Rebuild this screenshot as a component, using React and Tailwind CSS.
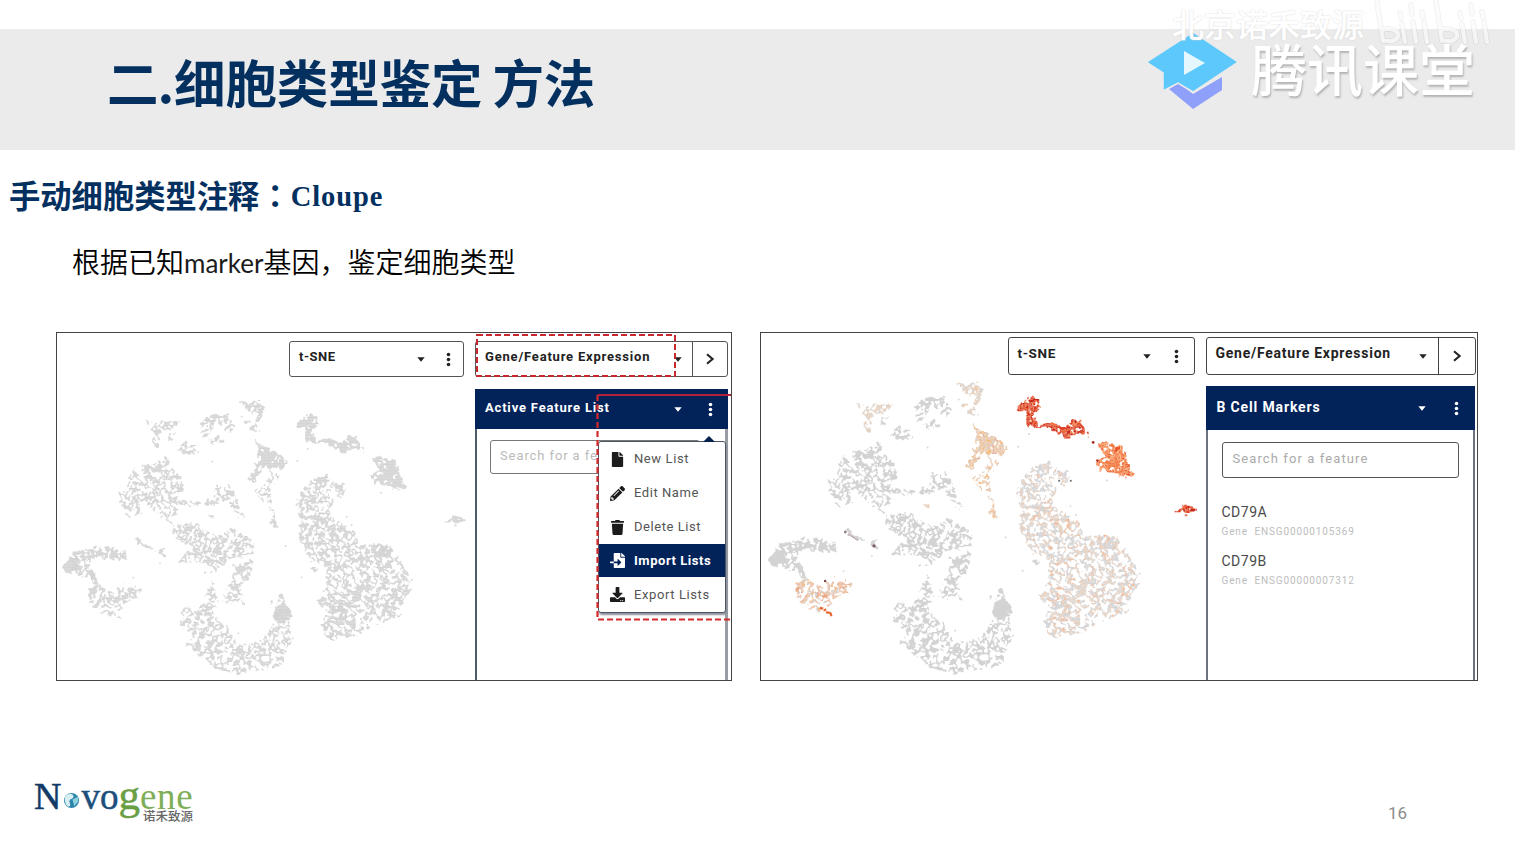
import React from "react";
import { FaFile, FaPencilAlt, FaTrash, FaFileImport, FaDownload } from "react-icons/fa";

const CLUSTERS = [
  { k: "beige", d: 0.4, p: [565,230,600,236,612,220,645,245,632,292,600,268] },
  { k: "beige", d: 0.4, p: [578,290,610,292,628,318,612,326,600,308] },
  { k: "beige", d: 0.36, p: [280,290,330,298,345,285,382,290,385,305,350,320,330,325,325,370,310,362,312,325] },
  { k: "gray", d: 0.3, p: [355,325,375,322,375,345,355,345] },
  { k: "gray", d: 0.34, p: [450,340,445,300,480,270,530,270,555,300,540,328,525,322,520,300,490,300,468,340] },
  { k: "gray", d: 0.4, p: [470,350,500,335,520,342,482,362] },
  { k: "gray", d: 0.42, p: [370,402,400,345,415,365,440,368,442,388,400,388] },
  { k: "orange", d: 0.62, p: [608,345,640,366,668,375,706,412,698,432,665,430,640,425,612,475,595,468,615,425,628,400] },
  { k: "orange", d: 0.28, p: [650,430,690,455,665,482,664,530,628,530,615,500,650,470] },
  { k: "orange", d: 0.3, p: [655,540,668,550,680,615,672,612,660,590] },
  { k: "gray", d: 0.29, p: [205,510,235,490,235,445,285,420,350,393,365,430,395,455,398,500,370,520,420,530,490,520,500,485,540,480,560,530,580,582,562,578,530,525,480,540,400,545,360,580,320,570,290,530,262,530,275,565,235,580,215,545] },
  { k: "gray", d: 0.3, p: [315,565,380,600,440,596,500,635,550,612,600,635,612,670,600,692,540,700,480,748,450,740,470,715,380,710,400,690,430,665,378,640,365,605] },
  { k: "gray", d: 0.34, p: [545,730,605,700,595,765,570,780,578,838,520,830,530,790,550,765] },
  { k: "gray", d: 0.3, p: [460,820,485,770,500,820,485,870,520,900,550,940,590,955,635,945,655,920,678,860,720,850,718,960,690,1025,600,1045,560,1045,490,1030,440,990,410,960,430,930,385,890,400,850,450,850] },
  { k: "gray", d: 1.2, p: [678,845,700,830,720,860,712,885,690,898,672,880] },
  { k: "gray", d: 0.45, p: [660,835,698,805,708,825,690,832] },
  { k: "gray", d: 0.4, p: [55,685,130,662,230,680,236,697,200,705,130,695,110,715,130,740,135,765,90,752,65,740] },
  { k: "gray", d: 1, p: [40,725,55,702,80,705,82,735,50,745] },
  { k: "warm", d: 0.34, p: [120,790,150,785,180,800,220,778,222,795,245,785,275,795,260,812,225,830,220,852,190,855,212,885,160,862,115,835] },
  { k: "gray", d: 0.35, p: [115,740,135,750,150,785,130,780] },
  { k: "red", d: 0.62, p: [730,305,770,262,800,275,800,300,782,315,795,345,840,345,880,350,895,333,915,335,945,385,930,378,905,368,888,388,830,358,765,350,765,312] },
  { k: "fire", d: 0.62, p: [965,395,1035,410,1050,450,1070,490,1050,498,1025,485,975,472,960,450,985,435] },
  { k: "speckle", d: 0.32, p: [742,540,745,505,770,475,830,450,850,465,845,490,870,465,892,500,870,515,838,510,850,545,835,570,870,595,915,625,920,660,980,655,1020,660,1030,690,1060,720,1085,790,1050,850,1055,875,960,905,920,935,840,945,815,905,830,860,800,830,830,790,830,730,780,700,745,650,750,590] },
  { k: "speckle", d: 0.6, p: [845,850,880,850,885,885,850,885] },
  { k: "speckle", d: 0.6, p: [985,660,1020,662,1022,690,985,692] },
  { k: "speckle", d: 0.6, p: [818,900,848,905,850,945,828,940] },
  { k: "gray", d: 0.4, p: [788,720,802,728,795,752,785,735] },
  { k: "red", d: 3, p: [1178,592,1200,584,1205,571,1222,578,1247,588,1212,599,1200,590] },
  { k: "gray", d: 1, p: [250,642,266,640,268,652,285,662,312,672,300,676,270,662] },
  { k: "gray", d: 1, p: [328,678,342,674,341,692,330,692] },
  { k: "warm", d: 1, p: [476,568,494,576,478,580] },
];

const PALETTES = {
  gray: ["#d3d3d3"],
  beige: ["#d6d3d1", "#e9d2bd", "#d3d3d3", "#efc9a6", "#e2cfc4"],
  orange: ["#e9d3bf", "#f5bd86", "#dccfc5", "#f2c9a2", "#e3b9a4"],
  warm: ["#d9cdc8", "#efc3a8", "#e9a987", "#d3d3d3", "#f3ba84"],
  speckle: ["#d3d5d8", "#d3d3d3", "#e8d3c3", "#d8d4d2", "#f0c0a2", "#d5d7dc"],
  red: ["#d8321c", "#ee6a3c", "#c9281a", "#f4905c", "#dc4426"],
  fire: ["#f5814c", "#f79a5e", "#e9582f", "#fbb27c", "#f07a45"],
};

function hash(x, y, s) {
  let h = (x * 374761393 + y * 668265263 + s * 1442695041) | 0;
  h = Math.imul(h ^ (h >>> 13), 1274126177);
  return ((h ^ (h >>> 16)) >>> 0) / 4294967295;
}

function noise(x, y, s) {
  const xi = Math.floor(x);
  const yi = Math.floor(y);
  const fx = x - xi;
  const fy = y - yi;
  const u = fx * fx * (3 - 2 * fx);
  const v = fy * fy * (3 - 2 * fy);
  const a = hash(xi, yi, s) * (1 - u) + hash(xi + 1, yi, s) * u;
  const b = hash(xi, yi + 1, s) * (1 - u) + hash(xi + 1, yi + 1, s) * u;
  return a * (1 - v) + b * v;
}

function inside(p, x, y) {
  let hit = false;
  for (let i = 0, j = p.length - 2; i < p.length; j = i, i += 2) {
    if (p[i + 1] > y !== p[j + 1] > y && x < ((p[j] - p[i]) * (y - p[i + 1])) / (p[j + 1] - p[i + 1]) + p[i]) hit = !hit;
  }
  return hit;
}

// Builds one path per colour out of short horizontal runs of cells.
function buildPaths(coloured) {
  const paths = {};
  const step = 0.75;
  for (const c of CLUSTERS) {
    const palette = coloured ? PALETTES[c.k] : PALETTES.gray;
    const xs = c.p.filter((_, i) => i % 2 === 0);
    const ys = c.p.filter((_, i) => i % 2 === 1);
    const x0 = Math.floor(Math.min(...xs) / 3) - 2;
    const x1 = Math.max(...xs) / 3 + 2;
    const y1 = Math.max(...ys) / 3 + 2;
    for (let y = Math.floor(Math.min(...ys) / 3) - 2; y < y1; y += step) {
      let start = null;
      let color = null;
      const flush = (end) => {
        if (start !== null) paths[color] = (paths[color] || "") + `M${start} ${y}h${(end - start).toFixed(2)}`;
        start = null;
      };
      let x = x0;
      for (; x < x1; x += step) {
        const jx = (noise(x / 3, y / 3, 5) - 0.5) * 15;
        const jy = (noise(x / 3, y / 3, 9) - 0.5) * 15;
        const rx = x * 0.83 + y * 0.56;
        const ry = y * 0.83 - x * 0.56;
        const n = Math.abs(noise(rx / 3.9, ry / 3.5, 1) * 0.65 + noise(rx / 2.1, ry / 2.1, 2) * 0.35 - 0.5);
        const hole = c.d < 0.6 && noise(rx / 3, ry / 3, 11) < 0.24;
        const on = !hole && inside(c.p, x * 3 + jx, y * 3 + jy) && n < c.d * 0.42;
        const next = palette[Math.floor(noise(x / 3.2, y / 3.2, 7) * palette.length * 1.7) % palette.length];
        if (!on || next !== color) flush(x);
        if (on && start === null) {
          start = x;
          color = next;
        }
      }
      flush(x);
    }
  }
  return Object.entries(paths);
}

const GRAY_PATHS = buildPaths(false);
const COLOR_PATHS = buildPaths(true);

function Dust({ color }) {
  const dots = [[487,410],[742,408],[773,372],[330,715],[250,758],[755,757],[707,663],[728,940],[565,925],[993,503],[1085,765],[905,600],[575,275],[890,575]];
  return dots.map(([x, y], i) => <circle key={i} cx={x / 3} cy={y / 3} r="0.9" fill={color} />);
}

function Plot({ paths, viewBox, accents }) {
  return (
    <svg viewBox={viewBox} preserveAspectRatio="none" className="block h-full w-full">
      {paths.map(([c, d]) => (
        <path key={c} d={d} stroke={c} strokeWidth="0.95" fill="none" />
      ))}
      <Dust color="#d6d6d6" />
      {accents}
    </svg>
  );
}

function Caret({ className }) {
  return (
    <svg viewBox="0 0 8 5" className={`h-[5px] w-2 shrink-0 ${className}`}>
      <path d="M0.3 0.3h7.4L4 4.7z" fill="currentColor" />
    </svg>
  );
}

function Dots() {
  return (
    <svg viewBox="0 0 5 16" className="h-[15px] w-[5px] shrink-0">
      <circle cx="2.5" cy="2.6" r="1.9" fill="currentColor" />
      <circle cx="2.5" cy="8" r="1.9" fill="currentColor" />
      <circle cx="2.5" cy="13.4" r="1.9" fill="currentColor" />
    </svg>
  );
}

function Chevron() {
  return (
    <svg viewBox="0 0 10 12" className="h-3 w-2.5">
      <path d="M2 1.2 7.6 6 2 10.8" fill="none" stroke="#222" strokeWidth="2.1" />
    </svg>
  );
}

const MENU = [
  { label: "New List", Icon: FaFile, row: "h-[34px]", text: "tracking-[0.6px]" },
  { label: "Edit Name", Icon: FaPencilAlt, row: "h-[34px]", text: "tracking-[0.55px]" },
  { label: "Delete List", Icon: FaTrash, row: "h-[34px]", text: "tracking-[0.55px]" },
  { label: "Import Lists", Icon: FaFileImport, row: "h-[33px]", text: "tracking-[0.55px] font-bold", active: true },
  { label: "Export Lists", Icon: FaDownload, row: "h-[35px]", text: "tracking-[0.6px]" },
];

function Menu() {
  return (
    <div className="absolute left-[123px] top-[108px] w-[128px] rounded-[3px] border border-[#4d5666] bg-white shadow-[1px_2px_2px_#8a8f98]">
      <svg viewBox="0 0 12 6" className="absolute -top-[6px] left-[104px] h-[6px] w-3">
        <path d="M0 6 6 0l6 6z" fill="#05204d" />
      </svg>
      {MENU.map(({ label, Icon, row, text, active }) => (
        <div key={label} className={`flex items-center gap-[9px] pl-[11px] ${row} ${active ? "bg-[#02225a] text-white" : "text-[#555]"}`}>
          <Icon className={`h-[15px] w-[15px] shrink-0 ${active ? "text-white" : "text-[#1c1c1c]"}`} />
          <span className={`whitespace-nowrap text-[13px] leading-4 ${text}`}>{label}</span>
        </div>
      ))}
    </div>
  );
}

function LeftPanel() {
  return (
    <section className="relative flex h-[349px] w-[676px] border-[1.5px] border-[#444] bg-white">
      <div className="relative h-full w-[418px]">
        <Plot paths={GRAY_PATHS} viewBox="7 8 418 347" />
        <div className="absolute left-[232px] top-2 flex h-9 w-[175px] items-center rounded-[3px] border-[1.5px] border-[#555] bg-white pl-[9px] text-[#222]">
          <span className="-mt-1 w-[118px] text-[13px] font-bold tracking-[0.5px]">t-SNE</span>
          <Caret className="mr-[21px]" />
          <Dots />
        </div>
      </div>
      <div className="relative h-full w-[256px] pt-2">
        <div className="flex h-9 w-[253px] rounded-[3px] border-[1.5px] border-[#555] text-[#222]">
          <div className="flex flex-1 items-center justify-between border-r-[1.5px] border-[#555] pl-[9px] pr-2.5">
            <span className="-mt-1 whitespace-nowrap text-[13px] font-bold tracking-[0.8px]">Gene/Feature Expression</span>
            <Caret className="" />
          </div>
          <div className="flex w-[34px] items-center justify-center"><Chevron /></div>
        </div>
        <div className="mt-3 flex h-10 w-[253px] items-center bg-[#02225a] pl-[10px] pr-[15px] text-white">
          <span className="-mt-0.5 flex-1 whitespace-nowrap text-[13px] font-bold tracking-[0.82px]">Active Feature List</span>
          <Caret className="mr-[26px]" />
          <Dots />
        </div>
        <div className="h-[251px] w-[253px] border-l-2 border-r-[3px] border-l-[#4f5b6a] border-r-[#9a9ea4] pl-[13px] pt-[11px]">
          <div className="h-[34px] w-[210px] rounded-[3px] border-[1.5px] border-[#777] pl-[9px] pt-[5px] text-[13px] leading-5 tracking-[0.9px] text-[#bbb]">Search for a feature</div>
        </div>
        <Menu />
        <svg viewBox="0 0 256 300" className="absolute left-0 top-0 h-[300px] w-[256px]">
          <rect x="2" y="2" width="198" height="41" fill="none" stroke="#c8282c" strokeWidth="2" strokeDasharray="6 3" />
          <path d="M256 62H122.500" stroke="#b3203a" strokeWidth="1.8" fill="none" />
          <path d="M122.500 62V286.500H256" stroke="#d42a2c" strokeWidth="2.2" fill="none" strokeDasharray="6 3" />
        </svg>
      </div>
    </section>
  );
}

function Gene({ name, id }) {
  return (
    <div className="h-[49px]">
      <div className="text-[14px] leading-5 tracking-[0.5px] text-[#4a4a4a]">{name}</div>
      <div className="whitespace-pre text-[10px] leading-5 tracking-[0.85px] text-[#bdbdbd]">{"Gene  " + id}</div>
    </div>
  );
}

function RightPanel() {
  const accents = (
    <>
      <circle cx="85" cy="216" r="1.3" fill="#8e7a88" />
      <path d="M88 218l9 6" stroke="#b9a3a8" strokeWidth="1.2" />
      <circle cx="112" cy="229" r="1.6" fill="#7e5a68" />
      <circle cx="66" cy="262" r="1.2" fill="#7c4a4a" />
      <path d="M61 287l3 1M65 289.500l2-1M67 291l4 1 1 3" stroke="#e8662c" strokeWidth="2" fill="none" />
      <circle cx="286" cy="168" r="1" fill="#777" />
      <circle cx="297" cy="168" r="1" fill="#777" />
      <circle cx="318" cy="132" r="1.3" fill="#a03020" />
      <circle cx="322" cy="149" r="1.2" fill="#b03020" />
    </>
  );
  return (
    <section className="flex h-[349px] w-[718px] border-[1.5px] border-[#444] bg-white">
      <div className="relative h-full w-[445px]">
        <Plot paths={COLOR_PATHS} viewBox="5.700 29.300 418.400 325.500" accents={accents} />
        <div className="absolute left-[247px] top-1 flex h-[38px] w-[187px] items-center rounded-[3px] border-[1.5px] border-[#444] bg-white pl-[9px] text-[#222]">
          <span className="-mt-1.5 w-[125px] text-[13.500px] font-bold tracking-[0.6px]">t-SNE</span>
          <Caret className="mr-[23px]" />
          <Dots />
        </div>
      </div>
      <div className="h-full w-[270px] pt-1">
        <div className="flex h-[38px] w-[270px] rounded-[3px] border-[1.5px] border-[#444] text-[#222]">
          <div className="flex flex-1 items-center justify-between border-r-[1.5px] border-[#444] pl-[9px] pr-[11px]">
            <span className="-mt-1.5 whitespace-nowrap text-[14px] font-bold tracking-[0.75px]">Gene/Feature Expression</span>
            <Caret className="" />
          </div>
          <div className="flex w-[36px] items-center justify-center"><Chevron /></div>
        </div>
        <div className="mt-[11px] flex h-11 w-[269px] items-center bg-[#02225a] pl-[11px] pr-4 text-white">
          <span className="-mt-0.5 flex-1 whitespace-nowrap text-[14px] font-bold tracking-[0.85px]">B Cell Markers</span>
          <Caret className="mr-[28px]" />
          <Dots />
        </div>
        <div className="h-[250px] w-[269px] border-x-2 border-[#6b747e] pl-[14px] pt-3">
          <div className="h-[36px] w-[237px] rounded-[3px] border-[1.5px] border-[#555] pl-[10px] pt-[6px] text-[13px] leading-5 tracking-[1.1px] text-[#aaa]">Search for a feature</div>
          <div className="pt-6">
            <Gene name="CD79A" id="ENSG00000105369" />
            <Gene name="CD79B" id="ENSG00000007312" />
          </div>
        </div>
      </div>
    </section>
  );
}

function ClassroomMark() {
  return (
    <div className="flex items-center gap-[13px]">
      <svg viewBox="0 0 92 78" className="h-[78px] w-[92px]">
        <path d="M23 58 33 52 47 63 76 46V59L47 78z" fill="#8fa0fb" />
        <path d="M0.500 31 47 1 92 31 47 61 32 52 17 60V42z" fill="#5cc8fb" stroke="#ebebeb" strokeWidth="1.500" />
        <path d="M38 20 59 32 38 44z" fill="#e4f7ff" />
      </svg>
      <span className="mt-1 whitespace-nowrap text-[56px] font-medium leading-[56px] text-white [text-shadow:1px_2px_2px_#b4b4b4]">腾讯课堂</span>
    </div>
  );
}

function Bilibili() {
  const d = "M3 2 9 41M62 2 68 41M28 24l3 18M39 22l3 20M50 22l3 20M88 24l3 18M99 22l3 20M110 22l3 20M26 13l1 5M37 5l1 9M48 12l1 5M86 13l1 5M97 5l1 9M108 12l1 5M9 40c10 3 16-1 15-6s-10-6-16-4M68 40c10 3 16-1 15-6s-10-6-16-4";
  return (
    <svg viewBox="0 0 120 46" className="h-[46px] w-[120px]" fill="none" strokeLinecap="round">
      <path d={d} stroke="#dadada" strokeWidth="5.500" />
      <path d={d} stroke="#f5f5f5" strokeWidth="4.200" />
      <path d="M0 0h120v29H0z" fill="#fff" fillOpacity="0.55" stroke="none" />
    </svg>
  );
}

function Novogene() {
  return (
    <div className="relative flex items-baseline font-['Liberation_Serif',serif] leading-none">
      <span className="text-[38px] text-[#123a66] [-webkit-text-stroke:0.5px_#123a66]">N</span>
      <svg viewBox="0 0 18 18" className="ml-[2px] mr-[1px] h-[17px] w-[17px]">
        <circle cx="9" cy="9" r="8" fill="#2b86ad" />
        <path d="M2 5c3-4 8-4 9-1s-3 3-4 5 2 4 0 6-6-3-5-10z" fill="#d7eef0" />
        <path d="M10 8l6-3v5l-4 5z" fill="#8fd0da" />
      </svg>
      <span className="text-[37px] text-[#1d4f7c] [-webkit-text-stroke:0.5px_#1d4f7c]">vo</span>
      <span className="text-[43px] text-[#6a9e45] [-webkit-text-stroke:0.5px_#6a9e45]">g</span>
      <span className="text-[37px] tracking-[0.7px] text-[#7fae58]">ene</span>
      <span className="absolute left-[109px] top-[37px] whitespace-nowrap font-['Noto_Sans_CJK_SC',sans-serif] text-[12.500px] font-medium leading-3 text-[#666]">诺禾致源</span>
    </div>
  );
}

export default function App() {
  return (
    <main className="relative flex h-[842px] w-[1515px] flex-col overflow-hidden bg-white font-[Roboto,'Noto_Sans_CJK_SC',sans-serif]">
      <header className="mt-[29px] flex h-[121px] shrink-0 items-start justify-between bg-[#ebebeb] pl-[107px] pr-[40px]">
        <h1 className="whitespace-pre pt-[15px] font-['Noto_Sans_CJK_SC',sans-serif] text-[51.500px] font-bold leading-[74px] tracking-[-0.100px] text-[#04305f]">
          二<span className="-ml-px">.</span>细胞类型鉴定<span className="ml-[10px]">方法</span>
        </h1>
        <div className="pt-[2px]"><ClassroomMark /></div>
      </header>
      <div className="absolute left-[1172px] top-0 flex items-start">
        <span className="whitespace-nowrap pt-[11px] text-[32px] font-medium leading-[30px] text-white [text-shadow:0_0_2px_#d5d5d5]">北京诺禾致源</span>
        <div className="ml-[10px]"><Bilibili /></div>
      </div>
      <h2 className="mt-[22px] flex items-center pl-[9px] font-['Noto_Sans_CJK_SC',sans-serif] text-[31.300px] font-bold leading-[46px] text-[#04305f]">
        手动细胞类型注释
        <span className="font-['Noto_Sans_CJK_TC',sans-serif]" lang="zh-Hant">：</span>
        <span className="pt-[4px] font-['Liberation_Serif',serif] text-[28.500px] leading-[42px] tracking-[0.9px]">Cloupe</span>
      </h2>
      <p className="mt-[22px] pl-[72px] font-['Noto_Sans_CJK_SC',sans-serif] text-[28px] font-[350] leading-[42px] text-black">
        根据已知<span className="font-[Lato,sans-serif] text-[26px] font-normal text-[#1c1c1c]">marker</span>基因，鉴定细胞类型
      </p>
      <div className="mt-[48px] flex gap-[27.500px] pl-[56px]">
        <LeftPanel />
        <RightPanel />
      </div>
      <footer className="mt-[92px] flex items-start justify-between pl-[34px] pr-[108px]">
        <Novogene />
        <span className="pt-[28px] text-[17px] leading-6 text-[#8c8c8c]">16</span>
      </footer>
    </main>
  );
}
